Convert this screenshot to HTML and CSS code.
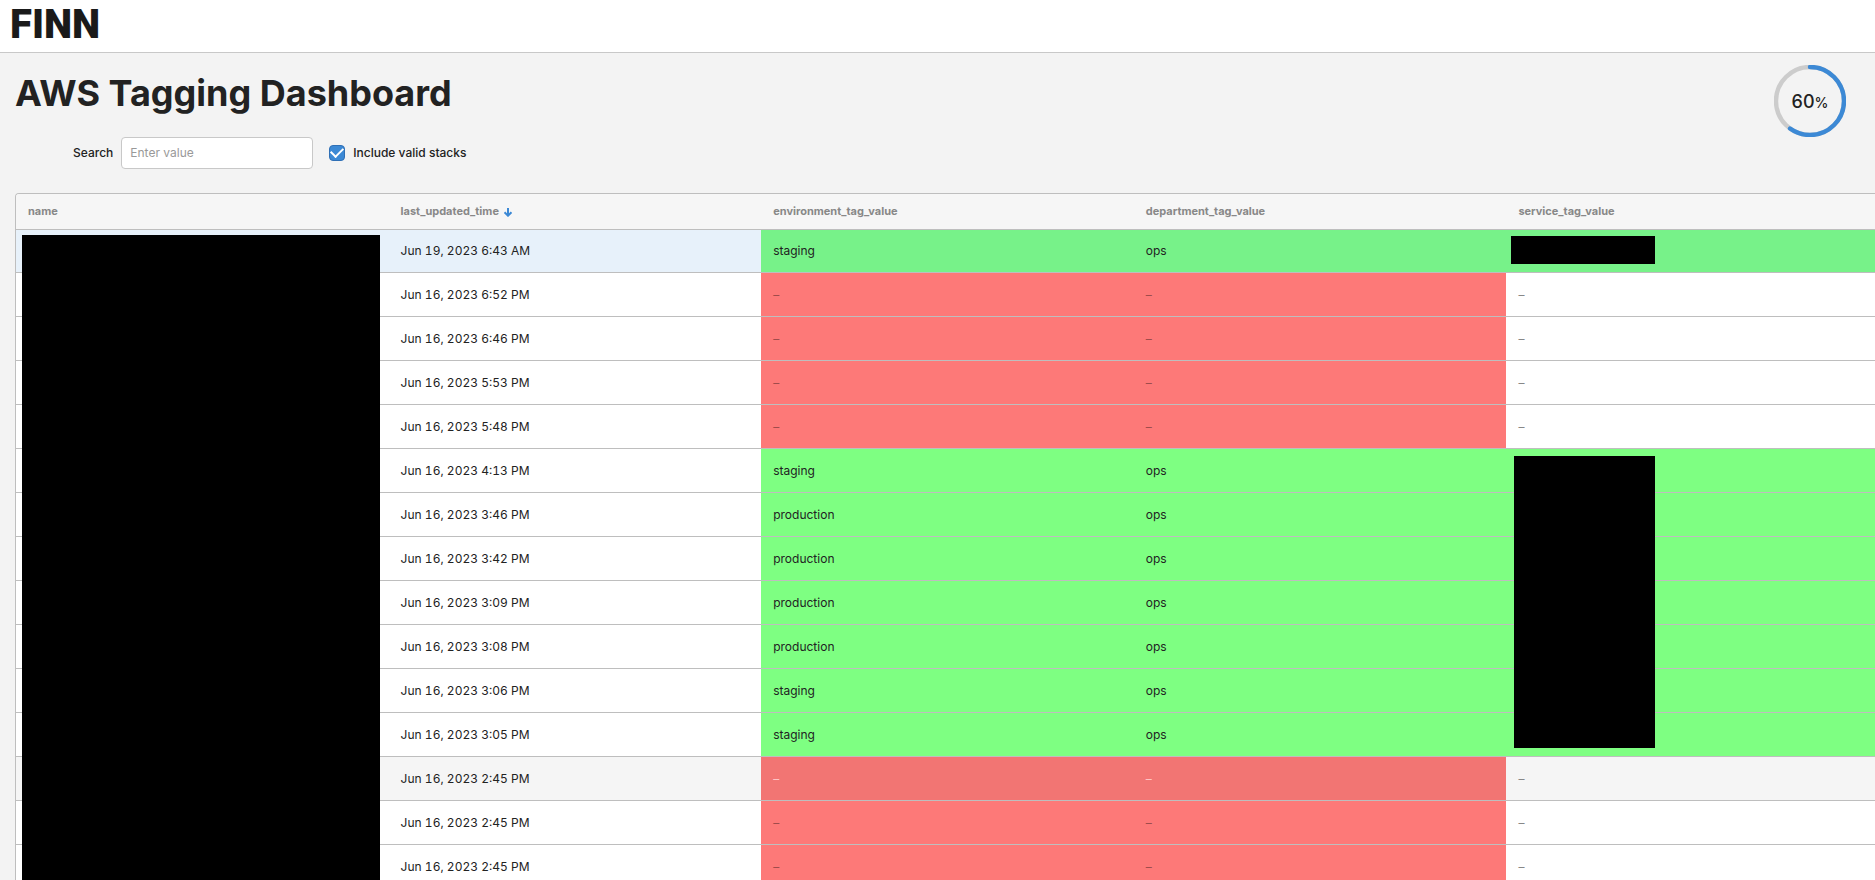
FILE: index.html
```html
<!DOCTYPE html>
<html lang="en">
<head>
<meta charset="utf-8">
<title>AWS Tagging Dashboard</title>
<link rel="stylesheet" href="styles.css">
</head>
<body>
<header class="topbar"><span class="logo">FINN</span></header>
<main class="page">
  <div class="intro">
    <div>
      <h1 class="title">AWS Tagging Dashboard</h1>
      <form class="filters">
        <label class="field-label" for="search">Search</label>
        <input class="search" id="search" type="text" placeholder="Enter value">
        <label class="check"><input class="check-box" type="checkbox" checked>Include valid stacks</label>
      </form>
    </div>
    <div class="ring">
      <svg class="ring-art" viewBox="0 0 72 72" aria-hidden="true">
        <circle class="ring-track" cx="36" cy="36" r="34"/>
        <circle class="ring-value" cx="36" cy="36" r="34" pathLength="100" stroke-dasharray="60 100" transform="rotate(-90 36 36)"/>
      </svg>
      <span class="ring-text">60<span class="ring-unit">%</span></span>
    </div>
  </div>
  <div class="table-wrap">
    <table class="stacks">
      <thead>
        <tr>
          <th>name</th>
          <th>last_updated_time<svg class="sort" viewBox="0 0 10 10" aria-hidden="true"><path d="M5 1v7.500M1.500 5.200L5 8.700l3.500-3.500"/></svg></th>
          <th>environment_tag_value</th>
          <th>department_tag_value</th>
          <th>service_tag_value</th>
        </tr>
      </thead>
      <tbody>
        <tr class="selected"><td><div class="mask mask-name"></div></td><td>Jun 19, 2023 6:43 AM</td><td class="ok">staging</td><td class="ok">ops</td><td class="ok"><div class="mask mask-service"></div></td></tr>
        <tr><td></td><td>Jun 16, 2023 6:52 PM</td><td class="bad">–</td><td class="bad">–</td><td class="none">–</td></tr>
        <tr><td></td><td>Jun 16, 2023 6:46 PM</td><td class="bad">–</td><td class="bad">–</td><td class="none">–</td></tr>
        <tr><td></td><td>Jun 16, 2023 5:53 PM</td><td class="bad">–</td><td class="bad">–</td><td class="none">–</td></tr>
        <tr><td></td><td>Jun 16, 2023 5:48 PM</td><td class="bad">–</td><td class="bad">–</td><td class="none">–</td></tr>
        <tr><td></td><td>Jun 16, 2023 4:13 PM</td><td class="ok">staging</td><td class="ok">ops</td><td class="ok"><div class="mask mask-services"></div></td></tr>
        <tr><td></td><td>Jun 16, 2023 3:46 PM</td><td class="ok">production</td><td class="ok">ops</td><td class="ok"></td></tr>
        <tr><td></td><td>Jun 16, 2023 3:42 PM</td><td class="ok">production</td><td class="ok">ops</td><td class="ok"></td></tr>
        <tr><td></td><td>Jun 16, 2023 3:09 PM</td><td class="ok">production</td><td class="ok">ops</td><td class="ok"></td></tr>
        <tr><td></td><td>Jun 16, 2023 3:08 PM</td><td class="ok">production</td><td class="ok">ops</td><td class="ok"></td></tr>
        <tr><td></td><td>Jun 16, 2023 3:06 PM</td><td class="ok">staging</td><td class="ok">ops</td><td class="ok"></td></tr>
        <tr><td></td><td>Jun 16, 2023 3:05 PM</td><td class="ok">staging</td><td class="ok">ops</td><td class="ok"></td></tr>
        <tr class="hovered"><td></td><td>Jun 16, 2023 2:45 PM</td><td class="bad">–</td><td class="bad">–</td><td class="none">–</td></tr>
        <tr><td></td><td>Jun 16, 2023 2:45 PM</td><td class="bad">–</td><td class="bad">–</td><td class="none">–</td></tr>
        <tr><td></td><td>Jun 16, 2023 2:45 PM</td><td class="bad">–</td><td class="bad">–</td><td class="none">–</td></tr>
      </tbody>
    </table>
  </div>
</main>
</body>
</html>
```
FILE: styles.css
```css
:root {
  --line: #bebebe;
  --blue: #3c89d5;
  --ink: #222;
}

* { box-sizing: border-box; }

body {
  margin: 0;
  height: 100vh;
  overflow: hidden;
  background: #f3f3f3;
  color: var(--ink);
  font: 12px/16px Inter, sans-serif;
}

.topbar {
  height: 53px;
  padding: 5px 10px;
  background: #fff;
  border-bottom: 1px solid #c8c8c8;
}

.logo {
  display: block;
  color: #1a1a1a;
  font: 900 40px/40px Roboto, sans-serif;
}

.page { padding: 12px 0 0 15px; }

.intro {
  display: flex;
  justify-content: space-between;
  padding-right: 29px;
  margin-bottom: 24px;
}

.title {
  margin: 4px 0 20px;
  font-size: 36px;
  line-height: 48px;
  font-weight: 700;
}

.filters {
  display: flex;
  align-items: center;
  height: 32px;
  padding-left: 58px;
  font-weight: 500;
}

.search {
  width: 192px;
  height: 32px;
  margin: 0 16px 0 8px;
  padding: 0 8px 2px;
  border: 1px solid #c8c8c8;
  border-radius: 4px;
  background: #fff;
  color: var(--ink);
  font: 12px Inter, sans-serif;
}

.search::placeholder { color: #999; }

.check {
  display: flex;
  align-items: center;
  gap: 8px;
}

.check-box {
  appearance: none;
  width: 16px;
  height: 16px;
  margin: 0;
  border: 1px solid #2f6fb5;
  border-radius: 4px;
  background: var(--blue);
  display: grid;
  place-content: center;
}

.check-box:checked::before {
  content: "";
  width: 10px;
  height: 6px;
  margin-bottom: 4px;
  border: solid #fff;
  border-width: 0 0 2px 2px;
  rotate: -45deg;
}

.ring {
  display: grid;
  place-items: center;
  width: 72px;
  height: 72px;
}

.ring > * { grid-area: 1 / 1; }

.ring-art { width: 72px; height: 72px; }

.ring-track,
.ring-value {
  fill: none;
  stroke: #ccc;
  stroke-width: 4.4;
}

.ring-value {
  stroke: var(--blue);
  stroke-linecap: round;
}

.ring-text {
  padding-top: 2px;
  font-size: 18px;
  font-weight: 500;
}

.ring-unit { font-size: 14px; }

.table-wrap {
  margin-right: -4px;
  border: 1px solid var(--line);
  border-right: 0;
  border-top-left-radius: 4px;
  overflow: hidden;
}

.stacks {
  width: 100%;
  table-layout: fixed;
  border-collapse: separate;
  border-spacing: 0;
  font-variant-numeric: tabular-nums;
}

.stacks th {
  height: 35px;
  padding: 0 12px 2px;
  background: #f6f6f6;
  color: #888;
  font-size: 11px;
  font-weight: 700;
  text-align: left;
}

.sort {
  width: 10px;
  height: 10px;
  margin-left: 4px;
  vertical-align: -2px;
  fill: none;
  stroke: var(--blue);
  stroke-width: 2;
}

.stacks td {
  position: relative;
  height: 44px;
  padding: 0 12px;
  background: #fff;
  border-bottom: 1px solid var(--line);
}

.stacks .ok { background: #7eff82; }
.stacks .bad { background: #fd7978; color: #a04c4c; }
.stacks .none { color: #888; }

.selected td {
  background: #e7f1fa;
  box-shadow: inset 0 1px 0 var(--line);
}

.stacks .selected td { background: #e7f1fa; }
.stacks .selected .ok { background: #77f289; }
.stacks .hovered td { background: #f5f5f5; }
.stacks .hovered .bad { background: #f27573; color: #ffc4c4; }

.mask {
  position: absolute;
  z-index: 1;
  background: #000;
}

.mask-name { top: 6px; left: 6px; right: 9px; height: 660px; }
.mask-service { top: 7px; left: 5px; width: 144px; height: 28px; }
.mask-services { top: 7px; left: 8px; width: 141px; height: 292px; }
```
